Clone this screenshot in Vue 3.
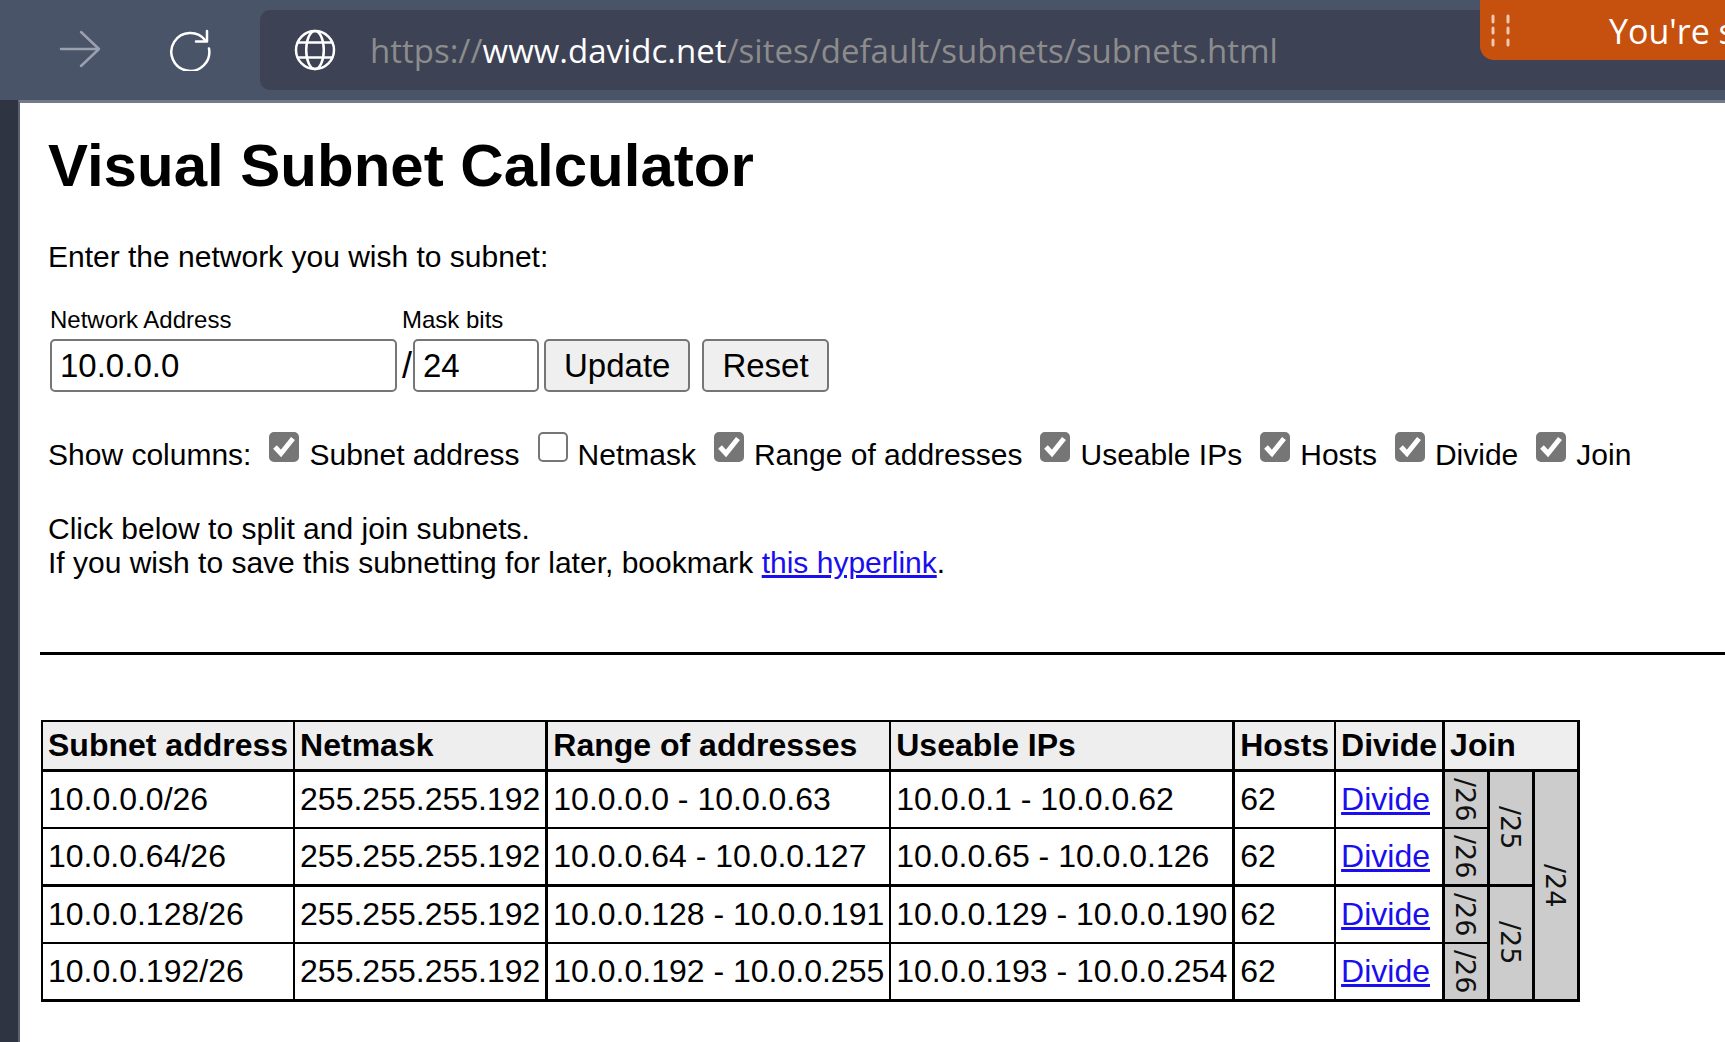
<script setup>
import { ref, reactive } from 'vue'

const network = ref('10.0.0.0')
const maskBits = ref('24')

const columns = reactive([
  { id: 'subnet', label: 'Subnet address', shown: true },
  { id: 'netmask', label: 'Netmask', shown: false },
  { id: 'range', label: 'Range of addresses', shown: true },
  { id: 'useable', label: 'Useable IPs', shown: true },
  { id: 'hosts', label: 'Hosts', shown: true },
  { id: 'divide', label: 'Divide', shown: true },
  { id: 'join', label: 'Join', shown: true },
])

// Each join entry lists the prefix block that starts on that row and the rows it covers.
const rows = [
  {
    subnet: '10.0.0.0/26', range: '10.0.0.0 - 10.0.0.63', useable: '10.0.0.1 - 10.0.0.62',
    joins: [{ bits: 26, span: 1 }, { bits: 25, span: 2 }, { bits: 24, span: 4 }],
  },
  {
    subnet: '10.0.0.64/26', range: '10.0.0.64 - 10.0.0.127', useable: '10.0.0.65 - 10.0.0.126',
    joins: [{ bits: 26, span: 1 }],
  },
  {
    subnet: '10.0.0.128/26', range: '10.0.0.128 - 10.0.0.191', useable: '10.0.0.129 - 10.0.0.190',
    joins: [{ bits: 26, span: 1 }, { bits: 25, span: 2 }],
  },
  {
    subnet: '10.0.0.192/26', range: '10.0.0.192 - 10.0.0.255', useable: '10.0.0.193 - 10.0.0.254',
    joins: [{ bits: 26, span: 1 }],
  },
]
</script>

<template>
  <div class="browser">
    <header class="toolbar">
      <button class="nav" type="button" aria-label="Forward">
        <svg class="faded" width="42" height="40" viewBox="0 0 42 40" fill="none" stroke="currentColor" stroke-width="2.5" stroke-linecap="round" stroke-linejoin="round">
          <path d="M2 19H40M22 2L40 19L22 36" />
        </svg>
      </button>
      <button class="nav" type="button" aria-label="Reload">
        <svg width="42" height="42" viewBox="0 0 42 42" fill="none" stroke="currentColor" stroke-width="2.5" stroke-linecap="round" stroke-linejoin="round">
          <path d="M40 19.500A19 19 0 1 1 36.5 11.5" />
          <path d="M38 2V12.500H27" />
        </svg>
      </button>
      <div class="address">
        <svg width="42" height="42" viewBox="0 0 42 42" fill="none" stroke="currentColor" stroke-width="2.5">
          <circle cx="21" cy="21" r="19" />
          <ellipse cx="21" cy="21" rx="8.800" ry="19" />
          <path d="M4 13.500H38M4 28.500H38" />
        </svg>
        <div class="url">https://<span class="host">www.davidc.net</span>/sites/default/subnets/subnets.html</div>
      </div>
      <div class="sharing">
        <svg width="20" height="34" viewBox="0 0 20 34" fill="none" stroke="#f0c8b0" stroke-width="3" stroke-linecap="round">
          <path d="M3 3v6M3 15v5M3 27v5M18 3v6M18 15v5M18 27v5" />
        </svg>
        <span>You're s</span>
      </div>
    </header>

    <main class="page">
      <form class="intro" @submit.prevent>
        <h1>Visual Subnet Calculator</h1>
        <p>Enter the network you wish to subnet:</p>

        <div class="entry">
          <div class="field">
            <label for="network">Network Address</label>
            <input id="network" v-model="network" class="text network" type="text">
          </div>
          <div class="field">
            <label for="mask">Mask bits</label>
            <div class="mask-row">
              <span class="slash">/</span>
              <input id="mask" v-model="maskBits" class="text mask" type="text">
            </div>
          </div>
          <div class="actions">
            <button type="submit">Update</button>
            <button type="reset">Reset</button>
          </div>
        </div>

        <div class="columns">
          <span class="caption">Show columns:</span>
          <label v-for="c in columns" :key="c.id" :for="'show-' + c.id">
            <input :id="'show-' + c.id" v-model="c.shown" type="checkbox">
            <span class="caption">{{ c.label }}</span>
          </label>
        </div>

        <p>
          Click below to split and join subnets.<br>
          If you wish to save this subnetting for later, bookmark <a href="#">this hyperlink</a>.
        </p>
      </form>

      <hr>

      <table>
        <thead>
          <tr>
            <th>Subnet address</th>
            <th class="thick">Netmask</th>
            <th>Range of addresses</th>
            <th class="thick">Useable IPs</th>
            <th>Hosts</th>
            <th class="thick">Divide</th>
            <th class="thick" colspan="3">Join</th>
          </tr>
        </thead>
        <tbody>
          <tr v-for="row in rows" :key="row.subnet">
            <td>{{ row.subnet }}</td>
            <td class="thick">255.255.255.192</td>
            <td>{{ row.range }}</td>
            <td class="thick">{{ row.useable }}</td>
            <td>62</td>
            <td class="thick"><a href="#">Divide</a></td>
            <td v-for="j in row.joins" :key="j.bits" class="join thick" :rowspan="j.span">
              <span>/{{ j.bits }}</span>
            </td>
          </tr>
        </tbody>
      </table>
    </main>
  </div>
</template>

<style>
body {
  margin: 0;
  background: #fff;
}
</style>

<style scoped>
.browser {
  min-height: 100vh;
  display: flex;
  flex-direction: column;
  overflow: hidden;
  color: #000;
  font-family: "Liberation Sans", Arial, sans-serif;
  font-size: 30px;
  line-height: 34px;
}

.toolbar {
  position: relative;
  display: flex;
  align-items: center;
  height: 100px;
  background: #495468;
  color: #fff;
}

.nav {
  display: flex;
  width: 110px;
  padding: 0;
  justify-content: center;
  border: 0;
  background: none;
  color: #fff;
}

.nav:first-child {
  margin-left: 25px;
}

.nav + .address {
  margin-left: 15px;
}

.faded {
  color: #9aa0ad;
}

.address {
  flex: 1;
  display: flex;
  align-items: center;
  gap: 34px;
  height: 80px;
  padding-left: 34px;
  border-radius: 10px 0 0 10px;
  background: #3d4254;
}

.url {
  padding-top: 2px;
  color: #8c8c8c;
  font: 33px/44px "Open Sans", "Noto Sans", sans-serif;
  white-space: nowrap;
}

.host {
  color: #fff;
}

.sharing {
  position: absolute;
  top: 0;
  right: 0;
  box-sizing: border-box;
  display: flex;
  align-items: center;
  gap: 99px;
  width: 245px;
  height: 60px;
  padding-left: 10px;
  overflow: hidden;
  border-bottom-left-radius: 14px;
  background: #c6500e;
  font: 34px/44px "Open Sans", "Noto Sans", sans-serif;
  white-space: nowrap;
}

.sharing span {
  padding-top: 2px;
}

.sharing svg {
  flex: none;
}

.page {
  flex: 1;
  padding: 29px 0 38px 20px;
  border-top: 3px solid #737b8a;
  border-left: 2px solid #5c606d;
  box-shadow: -18px 0 0 #2f3442;
  margin-left: 18px;
}

.intro {
  padding-left: 8px;
}

h1 {
  margin: 0 0 40px;
  font-size: 60px;
  line-height: 68px;
}

p {
  margin: 0;
}

a {
  color: #1a0dee;
  text-decoration-thickness: 3px;
}

.entry {
  display: flex;
  align-items: flex-end;
  gap: 5px;
  margin: 32px 0 40px 2px;
}

.field {
  display: flex;
  flex-direction: column;
  gap: 5px;
}

.field label {
  font-size: 24px;
  line-height: 28px;
}

.mask-row {
  display: flex;
  align-items: center;
}

.slash {
  padding-right: 1px;
  font-size: 36px;
}

.text,
.actions button {
  box-sizing: border-box;
  height: 53px;
  border: 2px solid #767676;
  border-radius: 5px;
  color: #000;
  font: 33px/38px "Liberation Sans", Arial, sans-serif;
}

.text {
  padding: 0 8px;
  background: #fff;
}

.network {
  width: 347px;
}

.mask {
  width: 126px;
}

.actions {
  display: flex;
  gap: 12px;
}

.actions button {
  padding: 0 18px;
  background: #efefef;
}

.columns {
  display: flex;
  gap: 18px;
  margin-bottom: 40px;
  white-space: nowrap;
}

.columns label {
  display: flex;
  align-items: flex-start;
  gap: 10px;
}

.caption {
  padding-top: 6px;
}

input[type="checkbox"] {
  flex: none;
  box-sizing: border-box;
  width: 30px;
  height: 30px;
  margin: 0;
  appearance: none;
  border: 2px solid #767676;
  border-radius: 5px;
  background: #fff;
}

input[type="checkbox"]:checked {
  background: #767676 url("data:image/svg+xml,%3Csvg xmlns='http://www.w3.org/2000/svg' viewBox='0 0 30 30'%3E%3Cpath d='M6 15L12 21.500L24 6.500' fill='none' stroke='white' stroke-width='5'/%3E%3C/svg%3E") center / 30px 30px no-repeat;
}

hr {
  height: 3px;
  margin: 72px 0 65px;
  border: 0;
  background: #000;
}

table {
  border-collapse: collapse;
  margin-left: 1px;
  font-size: 32px;
  white-space: nowrap;
}

th,
td {
  padding: 0 5px;
  border: 2px solid #000;
  line-height: 55px;
  text-align: left;
}

th {
  border-bottom-width: 3px;
  background: #eee;
  line-height: 47px;
}

tbody tr:nth-child(even) td {
  border-bottom-width: 3px;
}

.thick {
  border-right-width: 3px;
}

td.join {
  padding: 0 2px 0 0;
  background: #ccc;
  color: #111;
  font: 27px/40px "DejaVu Sans", sans-serif;
  text-align: center;
}

.join[rowspan="2"],
.join[rowspan="4"] {
  border-bottom-width: 3px;
}

.join span {
  display: inline-block;
  vertical-align: middle;
  writing-mode: vertical-rl;
}
</style>
